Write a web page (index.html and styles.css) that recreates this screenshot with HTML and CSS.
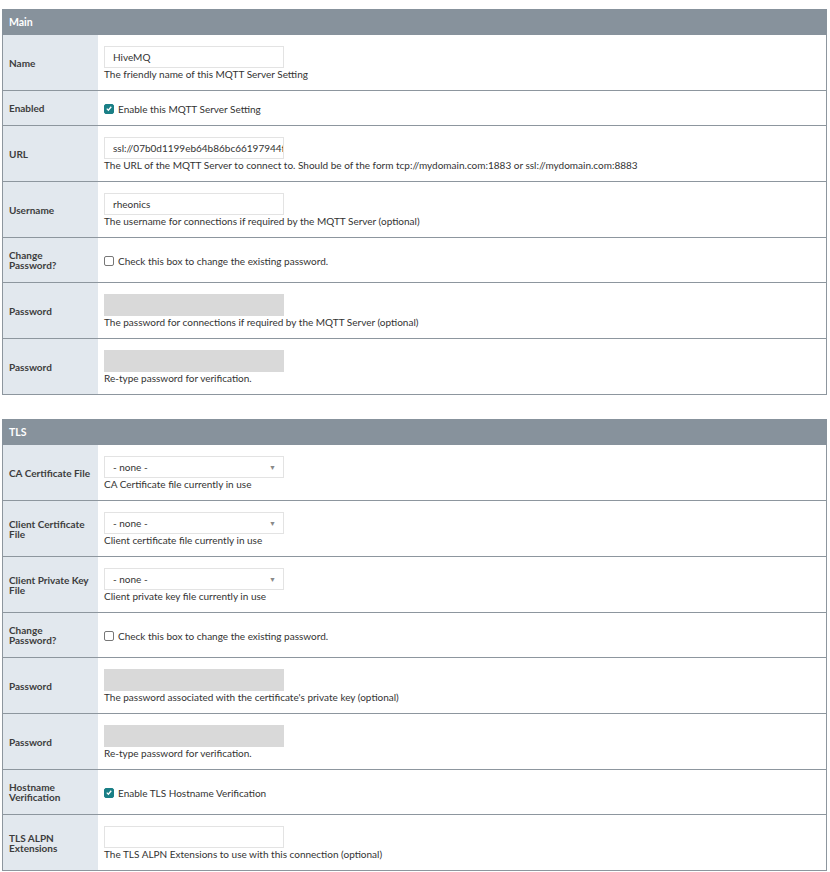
FILE: index.html
```html
<!DOCTYPE html>
<html>
<head>
<meta charset="utf-8">
<link rel="stylesheet" href="styles.css">
</head>
<body>
<div class="page">
  <div class="section">
    <div class="section-header">Main</div>
    <div class="row">
      <div class="label">Name</div>
      <div class="value">
        <div class="input">HiveMQ</div>
        <div class="help">The friendly name of this MQTT Server Setting</div>
      </div>
    </div>
    <div class="row">
      <div class="label">Enabled</div>
      <div class="value"><label class="check"><span class="box on"><svg viewBox="0 0 10 10" width="9" height="9"><path d="M2.2 5.2 L4.2 7.2 L7.8 2.8" fill="none" stroke="#fff" stroke-width="1.6"/></svg></span>Enable this MQTT Server Setting</label></div>
    </div>
    <div class="row">
      <div class="label">URL</div>
      <div class="value">
        <div class="input">ssl://07b0d1199eb64b86bc66197944f3</div>
        <div class="help">The URL of the MQTT Server to connect to. Should be of the form tcp://mydomain.com:1883 or ssl://mydomain.com:8883</div>
      </div>
    </div>
    <div class="row">
      <div class="label">Username</div>
      <div class="value">
        <div class="input">rheonics</div>
        <div class="help">The username for connections if required by the MQTT Server (optional)</div>
      </div>
    </div>
    <div class="row">
      <div class="label">Change Password?</div>
      <div class="value"><label class="check"><span class="box"></span>Check this box to change the existing password.</label></div>
    </div>
    <div class="row">
      <div class="label">Password</div>
      <div class="value">
        <div class="input disabled"></div>
        <div class="help">The password for connections if required by the MQTT Server (optional)</div>
      </div>
    </div>
    <div class="row">
      <div class="label">Password</div>
      <div class="value">
        <div class="input disabled"></div>
        <div class="help">Re-type password for verification.</div>
      </div>
    </div>
  </div>

  <div class="section">
    <div class="section-header">TLS</div>
    <div class="row">
      <div class="label">CA Certificate File</div>
      <div class="value">
        <div class="input select">- none -<span class="caret">▼</span></div>
        <div class="help">CA Certificate file currently in use</div>
      </div>
    </div>
    <div class="row">
      <div class="label">Client Certificate File</div>
      <div class="value">
        <div class="input select">- none -<span class="caret">▼</span></div>
        <div class="help">Client certificate file currently in use</div>
      </div>
    </div>
    <div class="row">
      <div class="label">Client Private Key File</div>
      <div class="value">
        <div class="input select">- none -<span class="caret">▼</span></div>
        <div class="help">Client private key file currently in use</div>
      </div>
    </div>
    <div class="row">
      <div class="label">Change Password?</div>
      <div class="value"><label class="check"><span class="box"></span>Check this box to change the existing password.</label></div>
    </div>
    <div class="row">
      <div class="label">Password</div>
      <div class="value">
        <div class="input disabled"></div>
        <div class="help">The password associated with the certificate's private key (optional)</div>
      </div>
    </div>
    <div class="row">
      <div class="label">Password</div>
      <div class="value">
        <div class="input disabled"></div>
        <div class="help">Re-type password for verification.</div>
      </div>
    </div>
    <div class="row">
      <div class="label">Hostname Verification</div>
      <div class="value"><label class="check"><span class="box on"><svg viewBox="0 0 10 10" width="9" height="9"><path d="M2.2 5.2 L4.2 7.2 L7.8 2.8" fill="none" stroke="#fff" stroke-width="1.6"/></svg></span>Enable TLS Hostname Verification</label></div>
    </div>
    <div class="row">
      <div class="label">TLS ALPN Extensions</div>
      <div class="value">
        <div class="input"></div>
        <div class="help">The TLS ALPN Extensions to use with this connection (optional)</div>
      </div>
    </div>
  </div>
</div>
</body>
</html>
```
FILE: styles.css
```css
html, body {
  margin: 0;
  padding: 0;
  background: #fff;
}
body {
  font-family: "Lato", "Liberation Sans", sans-serif;
  font-size: 10px;
  color: #333;
}
.page {
  padding: 9px 3px 0 2px;
  display: flex;
  flex-direction: column;
  gap: 24px;
}
.section {
  border: 1px solid #8d969e;
  border-top: none;
}
.section-header {
  background: #87929c;
  color: #fff;
  font-weight: bold;
  font-size: 10.5px;
  height: 26px;
  line-height: 26px;
  padding-left: 7px;
  margin: 0 -1px;
}
.row {
  display: grid;
  grid-template-columns: 95px 1fr;
  border-top: 1px solid #8d969e;
}
.section-header + .row {
  border-top: none;
}
.label {
  background: #e2e8ee;
  font-weight: bold;
  color: #3d3d3d;
  padding: 12px 6px;
  display: flex;
  align-items: center;
  line-height: 10px;
}
.value {
  padding: 11px 0 10px 6px;
  display: flex;
  flex-direction: column;
  justify-content: center;
}
.input {
  box-sizing: border-box;
  width: 180px;
  height: 22px;
  border: 1px solid #e3e3e3;
  background: #fff;
  padding: 0 8px;
  line-height: 20px;
  white-space: nowrap;
  overflow: hidden;
  color: #333;
  position: relative;
}
.input.disabled {
  background: #d9d9d9;
  border-color: #d9d9d9;
}
.input.select .caret {
  position: absolute;
  right: 7px;
  top: 0;
  font-size: 7px;
  color: #888;
}
.help {
  line-height: 12px;
  white-space: nowrap;
}
.check {
  display: flex;
  align-items: center;
  gap: 4px;
  line-height: 12px;
}
.box {
  box-sizing: border-box;
  width: 10px;
  height: 10px;
  border: 1px solid #777;
  border-radius: 2px;
  background: #fff;
  display: flex;
  align-items: center;
  justify-content: center;
}
.box.on {
  background: #1a7f86;
  border-color: #1a7f86;
}
.box svg { display: block; }
```
